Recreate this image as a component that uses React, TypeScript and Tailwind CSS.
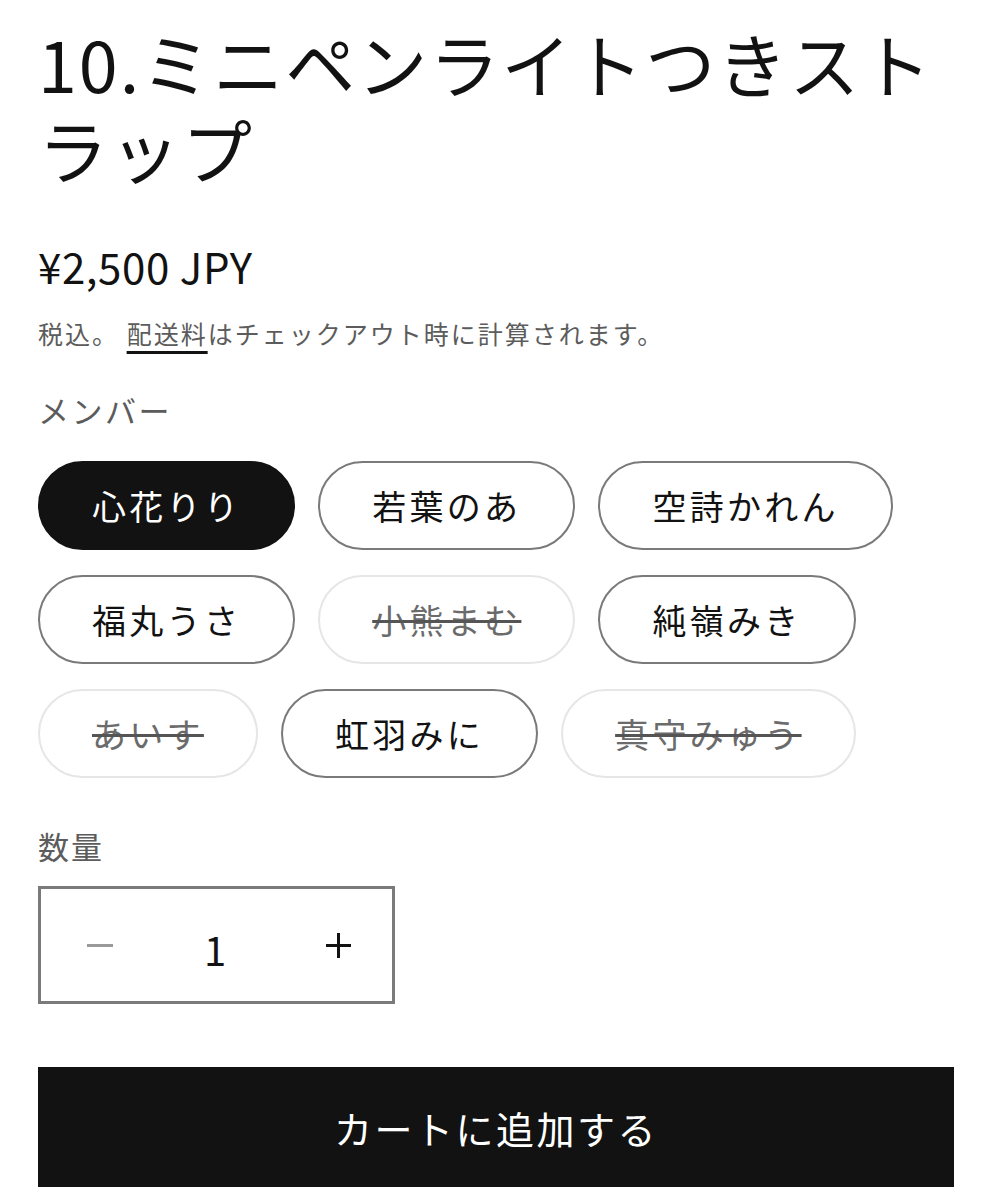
import React from "react";

// =============================================================================
// PRODUCT INFO - title, price, member variant picker, quantity, add to cart
// =============================================================================

type Member = {
  name: string;
  soldOut?: boolean;
};

const MEMBERS: Member[][] = [
  [{ name: "心花りり" }, { name: "若葉のあ" }, { name: "空詩かれん" }],
  [{ name: "福丸うさ" }, { name: "小熊まむ", soldOut: true }, { name: "純嶺みき" }],
  [
    { name: "あいす", soldOut: true },
    { name: "虹羽みに" },
    { name: "真守みゅう", soldOut: true },
  ],
];

const MemberPill: React.FC<{
  member: Member;
  selected: boolean;
  onSelect: () => void;
}> = ({ member, selected, onSelect }) => {
  const base =
    "h-[89px] px-[52px] rounded-full border-2 text-[34px] tracking-[3.3px] leading-none flex items-center justify-center";
  if (selected) {
    return (
      <button type="button" onClick={onSelect} className={`${base} bg-[#121212] border-[#121212] text-white`}>
        {member.name}
      </button>
    );
  }
  if (member.soldOut) {
    return (
      <button type="button" onClick={onSelect} className={`${base} bg-white border-[#e6e6e6] text-[#6b6b6b] line-through decoration-[#555] decoration-[3px]`}>
        {member.name}
      </button>
    );
  }
  return (
    <button type="button" onClick={onSelect} className={`${base} bg-white border-[#7a7a7a] text-[#121212]`}>
      {member.name}
    </button>
  );
};

export default function App() {
  const [selected, setSelected] = React.useState("心花りり");
  const [qty, setQty] = React.useState(1);

  return (
    <div className="min-h-[1200px] bg-white px-[38px] pt-[20px] text-[#121212] font-['Noto_Sans_CJK_JP','Noto_Sans',sans-serif]">
      {/* Title */}
      <h1 className="text-[70px] leading-[86px] tracking-[2px] font-normal">
        10.ミニペンライトつきストラップ
      </h1>

      {/* Price */}
      <p className="mt-[46px] text-[42px] leading-[56px] tracking-[0.6px]">¥2,500 JPY</p>

      {/* Tax note */}
      <p className="mt-[19px] text-[25px] leading-[40px] tracking-[2px] text-[#5c5c5c]">
        税込。{" "}
        <a href="#" className="underline decoration-[#121212] decoration-[3px] underline-offset-[7px]">
          配送料
        </a>
        はチェックアウト時に計算されます。
      </p>

      {/* Member picker */}
      <fieldset className="mt-[35px]">
        <legend className="text-[31px] leading-[44px] tracking-[2.5px] text-[#5c5c5c]">メンバー</legend>
        <div className="mt-[29px] flex flex-col gap-[25px]">
          {MEMBERS.map((row, i) => (
            <div key={i} className="flex gap-[23px]">
              {row.map((m) => (
                <MemberPill
                  key={m.name}
                  member={m}
                  selected={selected === m.name}
                  onSelect={() => setSelected(m.name)}
                />
              ))}
            </div>
          ))}
        </div>
      </fieldset>

      {/* Quantity */}
      <div className="mt-[46px]">
        <p className="text-[31px] leading-[44px] tracking-[2px] text-[#5c5c5c]">数量</p>
        <div className="mt-[18px] w-[357px] h-[118px] border-[3px] border-[#7a7a7a] flex items-center">
          <button
            type="button"
            onClick={() => setQty(Math.max(1, qty - 1))}
            className="w-[118px] h-full flex items-center justify-center text-[#9a9a9a]"
          >
            <svg width="26" height="3" viewBox="0 0 26 3">
              <rect width="26" height="3" fill="currentColor" />
            </svg>
          </button>
          <span className="flex-1 text-center text-[40px] leading-none pt-[8px] pr-[13px]">{qty}</span>
          <button
            type="button"
            onClick={() => setQty(qty + 1)}
            className="w-[108px] h-full flex items-center justify-center text-[#121212]"
          >
            <svg width="25" height="25" viewBox="0 0 25 25">
              <rect x="0" y="11" width="25" height="3" fill="currentColor" />
              <rect x="11" y="0" width="3" height="25" fill="currentColor" />
            </svg>
          </button>
        </div>
      </div>

      {/* Add to cart */}
      <button
        type="button"
        className="mt-[63px] w-full h-[120px] bg-[#121212] text-white text-[38px] tracking-[2.5px] flex items-center justify-center"
      >
        カートに追加する
      </button>
    </div>
  );
}
